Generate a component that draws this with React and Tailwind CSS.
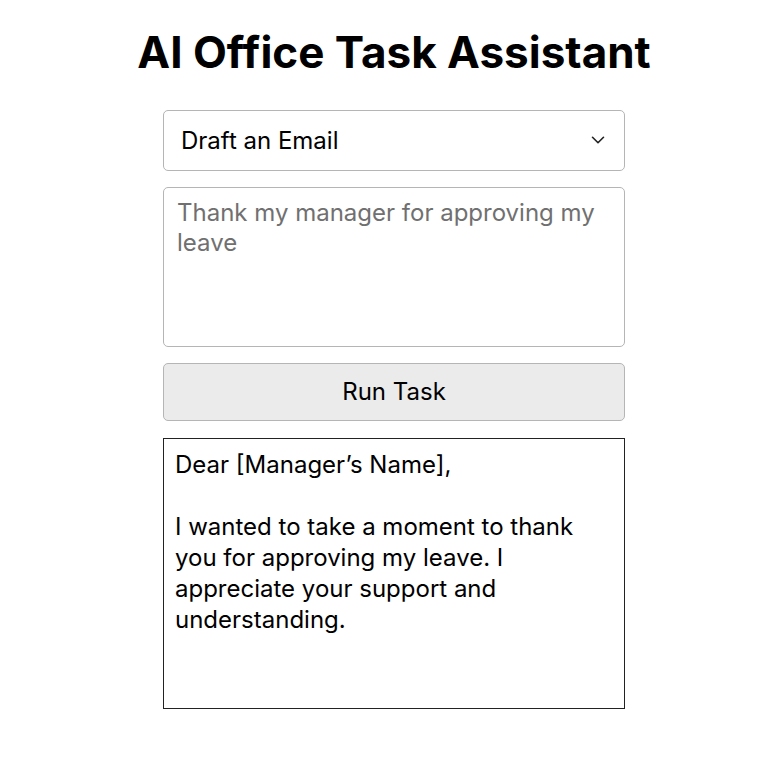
import React, { useState } from 'react';
import { ChevronDown } from 'lucide-react';

const RESULT =
  "Dear [Manager’s Name],\n\nI wanted to take a moment to thank you for approving my leave. I appreciate your support and understanding.";

const App = () => {
  const [task, setTask] = useState('email');
  const [prompt, setPrompt] = useState('');

  return (
    <div className="min-h-screen bg-white pl-[20px] font-['Inter',sans-serif] text-black">
      <div className="flex flex-col items-center pt-[26px]">
        <h1 className="text-[44px] font-bold leading-[52px]">AI Office Task Assistant</h1>

        <div className="mt-[32px] flex w-[462px] flex-col gap-4">
          <div className="relative">
            <select
              value={task}
              onChange={(e) => setTask(e.target.value)}
              className="h-[61px] w-full appearance-none rounded-[5px] border border-[#b5b5b5] bg-white pl-[17px] text-[24px] outline-none"
            >
              <option value="email">Draft an Email</option>
              <option value="summary">Summarize Text</option>
            </select>
            <ChevronDown size={22} strokeWidth={1.75} className="pointer-events-none absolute right-[16px] top-[19px] text-[#222]" />
          </div>

          <textarea
            value={prompt}
            onChange={(e) => setPrompt(e.target.value)}
            placeholder="Thank my manager for approving my leave"
            className="h-[160px] w-full resize-none rounded-[5px] border border-[#b5b5b5] px-[13px] py-[10px] text-[24px] leading-[30px] placeholder:text-[#707070] outline-none"
          />

          <button className="h-[58px] w-full rounded-[5px] border border-[#b5b5b5] bg-[#ebebeb] text-[24px]">
            Run Task
          </button>

          <div className="mt-[1px] h-[271px] w-full whitespace-pre-wrap border border-[#222] px-[11px] py-[10px] text-[24px] leading-[31px]">
            {RESULT}
          </div>
        </div>
      </div>
    </div>
  );
};

export default App;
